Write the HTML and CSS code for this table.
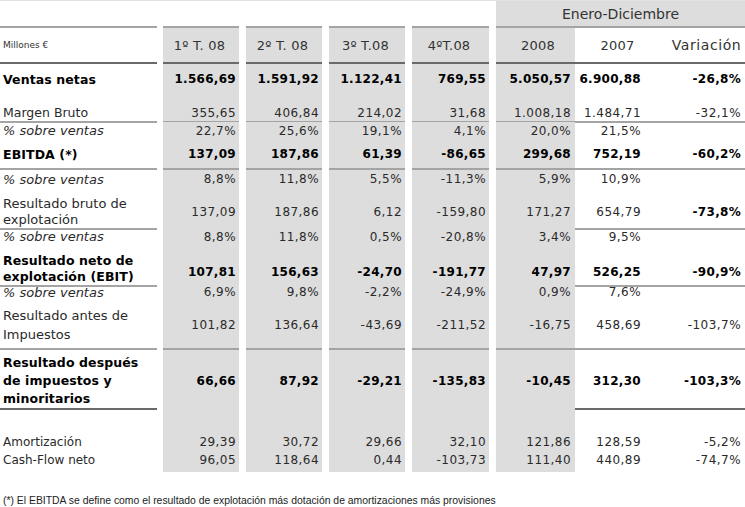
FILE: index.html
```html
<!DOCTYPE html>
<html lang="es">
<head>
<meta charset="utf-8">
<title>Resultados</title>
<link rel="stylesheet" href="styles.css">
</head>
<body>
<div class="report">
  <div class="row r-top ruled">
    <div class="lbl"></div>
    <div class="q blank"></div>
    <div class="q blank"></div>
    <div class="q blank"></div>
    <div class="q blank"></div>
    <div class="period">Enero-Diciembre</div>
  </div>

  <div class="row r-head ruled-dark head">
    <div class="lbl units">Millones €</div>
    <div class="q">1º T. 08</div>
    <div class="q">2º T. 08</div>
    <div class="q">3º T.08</div>
    <div class="q">4ºT.08</div>
    <div class="y8">2008</div>
    <div class="y7">2007</div>
    <div class="var var-head">Variación</div>
  </div>

  <div class="row r-ventas bold">
    <div class="lbl">Ventas netas</div>
    <div class="q">1.566,69</div>
    <div class="q">1.591,92</div>
    <div class="q">1.122,41</div>
    <div class="q">769,55</div>
    <div class="y8">5.050,57</div>
    <div class="y7">6.900,88</div>
    <div class="var">-26,8%</div>
  </div>

  <div class="row r-margen ruled">
    <div class="lbl">Margen Bruto</div>
    <div class="q">355,65</div>
    <div class="q">406,84</div>
    <div class="q">214,02</div>
    <div class="q">31,68</div>
    <div class="y8">1.008,18</div>
    <div class="y7">1.484,71</div>
    <div class="var">-32,1%</div>
  </div>

  <div class="row r-pct1">
    <div class="lbl it">% sobre ventas</div>
    <div class="q">22,7%</div>
    <div class="q">25,6%</div>
    <div class="q">19,1%</div>
    <div class="q">4,1%</div>
    <div class="y8">20,0%</div>
    <div class="y7">21,5%</div>
    <div class="var"></div>
  </div>

  <div class="row r-ebitda ruled bold">
    <div class="lbl">EBITDA (*)</div>
    <div class="q">137,09</div>
    <div class="q">187,86</div>
    <div class="q">61,39</div>
    <div class="q">-86,65</div>
    <div class="y8">299,68</div>
    <div class="y7">752,19</div>
    <div class="var">-60,2%</div>
  </div>

  <div class="row r-pct2">
    <div class="lbl it">% sobre ventas</div>
    <div class="q">8,8%</div>
    <div class="q">11,8%</div>
    <div class="q">5,5%</div>
    <div class="q">-11,3%</div>
    <div class="y8">5,9%</div>
    <div class="y7">10,9%</div>
    <div class="var"></div>
  </div>

  <div class="row r-bruto ruled">
    <div class="lbl">Resultado bruto de<br>explotación</div>
    <div class="q">137,09</div>
    <div class="q">187,86</div>
    <div class="q">6,12</div>
    <div class="q">-159,80</div>
    <div class="y8">171,27</div>
    <div class="y7">654,79</div>
    <div class="var b">-73,8%</div>
  </div>

  <div class="row r-pct3">
    <div class="lbl it">% sobre ventas</div>
    <div class="q">8,8%</div>
    <div class="q">11,8%</div>
    <div class="q">0,5%</div>
    <div class="q">-20,8%</div>
    <div class="y8">3,4%</div>
    <div class="y7">9,5%</div>
    <div class="var"></div>
  </div>

  <div class="row r-ebit ruled bold">
    <div class="lbl">Resultado neto de<br>explotación (EBIT)</div>
    <div class="q">107,81</div>
    <div class="q">156,63</div>
    <div class="q">-24,70</div>
    <div class="q">-191,77</div>
    <div class="y8">47,97</div>
    <div class="y7">526,25</div>
    <div class="var">-90,9%</div>
  </div>

  <div class="row r-pct4">
    <div class="lbl it">% sobre ventas</div>
    <div class="q">6,9%</div>
    <div class="q">9,8%</div>
    <div class="q">-2,2%</div>
    <div class="q">-24,9%</div>
    <div class="y8">0,9%</div>
    <div class="y7">7,6%</div>
    <div class="var"></div>
  </div>

  <div class="row r-antes ruled">
    <div class="lbl">Resultado antes de<br>Impuestos</div>
    <div class="q">101,82</div>
    <div class="q">136,64</div>
    <div class="q">-43,69</div>
    <div class="q">-211,52</div>
    <div class="y8">-16,75</div>
    <div class="y7">458,69</div>
    <div class="var">-103,7%</div>
  </div>

  <div class="row r-despues ruled-dark bold">
    <div class="lbl">Resultado después<br>de impuestos y<br>minoritarios</div>
    <div class="q">66,66</div>
    <div class="q">87,92</div>
    <div class="q">-29,21</div>
    <div class="q">-135,83</div>
    <div class="y8">-10,45</div>
    <div class="y7">312,30</div>
    <div class="var">-103,3%</div>
  </div>

  <div class="row r-gap">
    <div class="lbl"></div>
    <div class="q"></div>
    <div class="q"></div>
    <div class="q"></div>
    <div class="q"></div>
    <div class="y8"></div>
    <div class="y7"></div>
    <div class="var"></div>
  </div>

  <div class="row r-amort">
    <div class="lbl">Amortización</div>
    <div class="q">29,39</div>
    <div class="q">30,72</div>
    <div class="q">29,66</div>
    <div class="q">32,10</div>
    <div class="y8">121,86</div>
    <div class="y7">128,59</div>
    <div class="var">-5,2%</div>
  </div>

  <div class="row r-cash">
    <div class="lbl">Cash-Flow neto</div>
    <div class="q">96,05</div>
    <div class="q">118,64</div>
    <div class="q">0,44</div>
    <div class="q">-103,73</div>
    <div class="y8">111,40</div>
    <div class="y7">440,89</div>
    <div class="var">-74,7%</div>
  </div>

  <p class="note">(*) El EBITDA se define como el resultado de explotación más dotación de amortizaciones más provisiones</p>
</div>
</body>
</html>
```

FILE: styles.css
```css
html, body {
  margin: 0;
  padding: 0;
  background: #ffffff;
}

.report {
  width: 745px;
  font-family: "DejaVu Sans", Verdana, sans-serif;
  font-size: 12px;
  color: #2a2a2a;
  border-top: 1px solid #e2e2e2;
  box-sizing: border-box;
}

.row {
  display: grid;
  grid-template-columns: 163px 83px 83px 83px 84px 79px 85px 85px;
  box-sizing: border-box;
}

.row > div {
  display: flex;
  align-items: center;
  justify-content: flex-end;
  box-sizing: border-box;
  white-space: nowrap;
  letter-spacing: 0.45px;
}

.row .lbl {
  justify-content: flex-start;
  margin-right: 6px;
  padding-left: 3px;
  line-height: 17px;
  white-space: normal;
  letter-spacing: 0;
}

.row .q {
  margin-right: 7px;
  padding-right: 3px;
  background: #dddddd;
}

.row .q.blank {
  background: transparent;
}

.row .y8 {
  background: #dddddd;
  padding-right: 4px;
}

.row .y7 {
  padding-right: 19px;
}

.row .var {
  padding-right: 4px;
}

.row .period {
  grid-column: 6 / span 3;
  justify-content: center;
  background: #dddddd;
  font-size: 14px;
  letter-spacing: 0;
  color: #333;
  padding-top: 1px;
}

.ruled > div {
  border-bottom: 2px solid #a4a4a4;
}

.ruled-dark > div {
  border-bottom: 2px solid #6a6a6a;
}

.head > div {
  justify-content: center;
  font-size: 13px;
  letter-spacing: 0.2px;
  color: #333;
}

.head .units {
  justify-content: flex-start;
  font-size: 9px;
  letter-spacing: 0;
}

.head .var-head {
  font-size: 14px;
  letter-spacing: 0.6px;
  padding-left: 8px;
  padding-right: 0;
}

.head .y7 {
  padding-right: 0;
}

.head .y8 {
  padding-left: 5px;
  padding-right: 0;
}

.bold > div,
.row .b {
  font-weight: bold;
  color: #000;
  letter-spacing: 0.3px;
}

.bold > .lbl {
  font-size: 12.5px;
  letter-spacing: 0.1px;
}

.it {
  font-style: italic;
  font-size: 13px;
}

.r-top { height: 27px; }
.r-head { height: 36px; }
.r-ventas { height: 30px; }
.r-margen { height: 28px; }
.r-margen > div { padding-top: 10px; }
.r-margen > .lbl { font-size: 12.5px; }
.r-pct1 { height: 14px; }
.r-ebitda { height: 34px; }
.r-ebitda > div { padding-top: 4px; }
.r-pct2 { height: 18px; }
.r-bruto { height: 39px; }
.r-bruto > div { padding-top: 8px; }
.r-bruto > .lbl { line-height: 16px; font-size: 13px; }
.r-pct3 { height: 19px; }
.r-ebit { height: 37px; }
.r-ebit > div { padding-top: 13px; }
.r-ebit > .lbl { padding-top: 7px; line-height: 16px; }
.r-pct4 { height: 18px; }
.r-antes { height: 49px; }
.r-antes > .lbl { line-height: 19px; font-size: 13px; }
.r-despues { height: 52px; }
.r-despues > div { padding-top: 4px; }
.r-despues > .lbl { line-height: 18px; }
.r-gap { height: 31px; }
.r-amort { height: 18px; }
.r-cash { height: 21px; }
.r-cash > div { padding-bottom: 3px; }

.note {
  margin: 0;
  padding: 22px 0 0 3px;
  font-family: "Liberation Sans", Arial, sans-serif;
  font-size: 10.4px;
  line-height: 13px;
  color: #222;
}
```
